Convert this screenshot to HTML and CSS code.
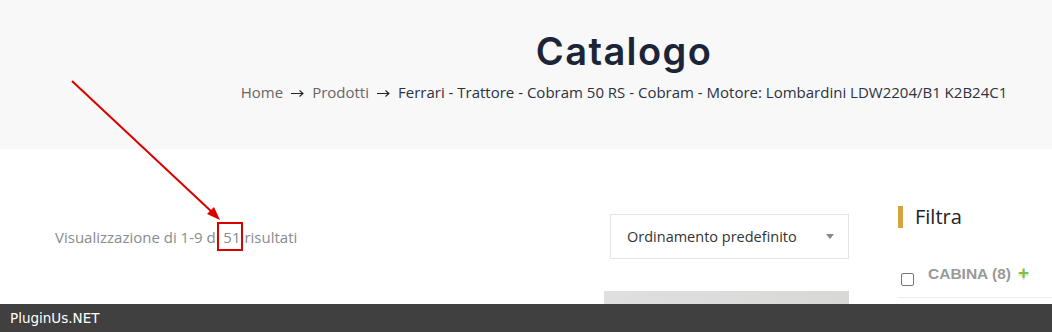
FILE: index.html
```html
<!DOCTYPE html>
<html lang="it">
<head>
  <meta charset="UTF-8">
  <title>Catalogo</title>
  <link rel="stylesheet" href="styles.css">
</head>
<body>
  <div class="page-header">
    <div class="header-inner">
      <h1>Catalogo</h1>
      <nav class="breadcrumb">
        <a href="#">Home</a>
        <svg class="sep" width="13" height="8" viewBox="0 0 13 8"><path d="M0 4.5H12M8.5 1.5L12 4.5L8.5 7.5" fill="none" stroke="#222" stroke-width="1.1"/></svg>
        <a href="#">Prodotti</a>
        <svg class="sep" width="13" height="8" viewBox="0 0 13 8"><path d="M0 4.5H12M8.5 1.5L12 4.5L8.5 7.5" fill="none" stroke="#222" stroke-width="1.1"/></svg>
        <span class="current">Ferrari - Trattore - Cobram 50 RS - Cobram - Motore: Lombardini LDW2204/B1 K2B24C1</span>
      </nav>
    </div>
  </div>

  <div class="shop">
    <div class="shop-content">
      <div class="toolbar">
        <p class="result-count">Visualizzazione di 1-9 di <span class="mark">51</span> risultati</p>
        <div class="ordering">
          <span>Ordinamento predefinito</span>
          <span class="caret"></span>
        </div>
      </div>
      <div class="products">
        <div class="product"></div>
        <div class="product"></div>
        <div class="product"><div class="thumb"></div></div>
      </div>
    </div>

    <aside class="sidebar">
      <h3 class="widget-title">Filtra</h3>
      <div class="filter-row">
        <span class="checkbox"></span>
        <span class="filter-name">CABINA (8)</span>
        <span class="plus">+</span>
      </div>
    </aside>
  </div>

  <!-- freccia dell'annotazione -->
  <svg class="annot-arrow" width="240" height="240" viewBox="0 0 240 240">
    <line x1="72" y1="81" x2="213" y2="213" stroke="#d90000" stroke-width="2"/>
    <polygon points="220,220 207,214 214,207" fill="#d90000"/>
  </svg>

  <div class="footer-bar">PluginUs.NET</div>
</body>
</html>
```
FILE: styles.css
```css
html {
  overflow: hidden;
}

body {
  margin: 0;
  padding: 0;
  width: 1052px;
  height: 332px;
  overflow: hidden;
  background-color: #fff;
  font-family: "Open Sans", sans-serif;
  position: relative;
}

.page-header {
  background-color: #f8f8f8;
  height: 149px;
}

.header-inner {
  margin-left: 196px;
  width: 856px;
  text-align: center;
  padding-top: 28px;
}

.header-inner h1 {
  margin: 0;
  font-family: "Inter", sans-serif;
  font-weight: 600;
  font-size: 38px;
  line-height: 46px;
  color: #1c2537;
  letter-spacing: 1.4px;
}

.breadcrumb {
  margin-top: 8px;
  font-size: 15px;
  line-height: 20px;
  color: #2d3142;
  display: flex;
  justify-content: center;
  align-items: center;
  gap: 8px;
}

.breadcrumb a {
  color: #666;
  text-decoration: none;
}

.breadcrumb .sep {
  margin-top: 2px;
}

.shop {
  display: flex;
  gap: 49px;
  padding: 65px 0 0 55px;
}

.shop-content {
  width: 794px;
}

.toolbar {
  display: flex;
  justify-content: space-between;
  align-items: center;
}

.result-count {
  margin: 0;
  font-size: 15px;
  color: #888b90;
}

.mark {
  position: relative;
}

.mark::after {
  content: '';
  position: absolute;
  left: -6px;
  top: -5px;
  width: 22px;
  height: 25px;
  border: 2px solid #d90000;
}

.ordering {
  height: 43px;
  border: 1px solid #e3e3e3;
  display: flex;
  align-items: center;
  justify-content: space-between;
  padding: 0 14px 0 16px;
  width: 207px;
  font-size: 14.5px;
  color: #333;
}

.caret {
  width: 0;
  height: 0;
  border-left: 4px solid transparent;
  border-right: 4px solid transparent;
  border-top: 5px solid #888;
}

.products {
  display: grid;
  grid-template-columns: repeat(3, 245px);
  column-gap: 29.5px;
  margin-top: 32px;
}

.thumb {
  height: 40px;
  background: linear-gradient(90deg, #dfdfdf, #d8d9d7);
}

.sidebar {
  width: 154px;
  flex-shrink: 0;
}

.widget-title {
  margin: -8px 0 0 0;
  border-left: 5px solid #d6a33e;
  padding-left: 12px;
  font-size: 20px;
  font-weight: 400;
  line-height: 22px;
  color: #222;
}

.filter-row {
  margin-top: 37px;
  display: flex;
  align-items: flex-start;
  padding: 0 0 11px 3px;
  border-bottom: 1px solid #ececec;
}

.checkbox {
  width: 11px;
  height: 11px;
  border: 1px solid #777;
  border-radius: 2px;
  margin-top: 8px;
}

.filter-name {
  margin-left: 14px;
  font-family: "Liberation Sans", Arial, sans-serif;
  font-weight: bold;
  font-size: 15.5px;
  color: #999;
}

.plus {
  margin-left: 7px;
  font-family: "Liberation Sans", Arial, sans-serif;
  font-weight: bold;
  font-size: 19px;
  line-height: 16px;
  color: #7cc142;
  text-shadow: 0 2px 1px #e0e0e0;
}

.annot-arrow {
  position: absolute;
  left: 0;
  top: 0;
}

.footer-bar {
  position: fixed;
  left: 0;
  bottom: 0;
  width: 100%;
  height: 28px;
  background-color: #404040;
  color: #fff;
  font-family: "DejaVu Sans", sans-serif;
  font-size: 13.5px;
  line-height: 28px;
  padding-left: 10px;
  box-sizing: border-box;
}
```
